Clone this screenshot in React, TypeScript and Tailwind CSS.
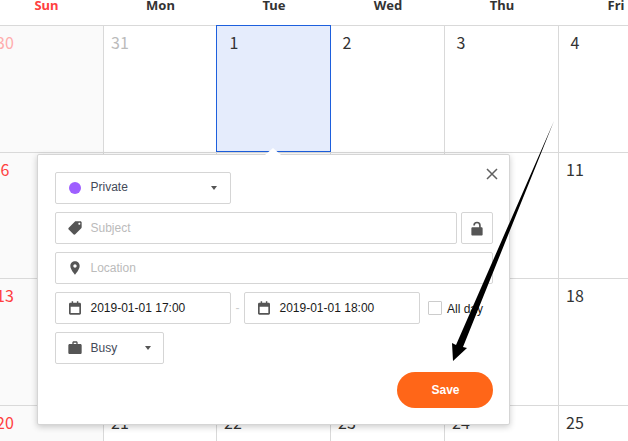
const columns = ["Sun", "Mon", "Tue", "Wed", "Thu", "Fri"];

const rows = [
  ["30", "31", "1", "2", "3", "4"],
  ["6", "", "", "", "", "11"],
  ["13", "", "", "", "", "18"],
  ["20", "21", "22", "23", "24", "25"],
];

function Icon({ d, flip, size = 16 }: { d: string; flip?: boolean; size?: number }) {
  return (
    <svg viewBox="0 0 24 24" width={size} height={size} fill="#555555" className={flip ? "shrink-0 -scale-x-100" : "shrink-0"}>
      <path d={d} fillRule="evenodd" />
    </svg>
  );
}

const TAG = "M21.41 11.58l-9-9C12.05 2.22 11.55 2 11 2H4c-1.1 0-2 .9-2 2v7c0 .55.22 1.05.59 1.42l9 9c.36.36.86.58 1.41.58.55 0 1.05-.22 1.41-.59l7-7c.37-.36.59-.86.59-1.41 0-.55-.23-1.06-.59-1.42zM5.5 7C4.67 7 4 6.33 4 5.5S4.67 4 5.5 4 7 4.67 7 5.5 6.33 7 5.5 7z";
const PLACE = "M12 2C8.13 2 5 5.13 5 9c0 5.25 7 13 7 13s7-7.75 7-13c0-3.87-3.13-7-7-7zm0 9.5c-1.38 0-2.5-1.12-2.5-2.5s1.12-2.5 2.5-2.5 2.5 1.12 2.5 2.5-1.12 2.5-2.5 2.5z";
const CAL = "M7 2h2.2v2h5.6V2H17v2h2c1.1 0 2 .9 2 2v14c0 1.1-.9 2-2 2H5c-1.1 0-2-.9-2-2V6c0-1.1.9-2 2-2h2V2zM5.5 10v9.5h13V10h-13z";
const WORK = "M20 6h-4V4c0-1.11-.89-2-2-2h-4c-1.11 0-2 .89-2 2v2H4c-1.11 0-1.99.89-1.99 2L2 19c0 1.11.89 2 2 2h16c1.11 0 2-.89 2-2V8c0-1.11-.89-2-2-2zm-6 0h-4V4h4v2z";
const LOCK = "M6 11h8.8V8.5a2.8 2.8 0 0 0-5.6 0H7a5 5 0 0 1 10 0V11h1c.8 0 1.5.7 1.5 1.5v8c0 .8-.7 1.5-1.5 1.5H6c-.8 0-1.5-.7-1.5-1.5v-8c0-.8.7-1.5 1.5-1.5z";

function Caret() {
  return <span className="w-0 h-0 border-x-[3.5px] border-x-transparent border-t-[4px] border-t-[#555555]" />;
}

export default function App() {
  return (
    <div className="relative w-[628px] h-[441px] overflow-hidden bg-white font-['Noto_Sans_CJK_SC','Noto_Sans',sans-serif]">
      <div className="w-[684px] -ml-[11px]">
        <div className="grid grid-cols-[115px_113px_114px_114px_114px_114px] h-[26px] border-b border-[#d9d9d9] font-['Noto_Sans',sans-serif]">
          {columns.map((name, j) => (
            <div key={name} className={`text-center text-[13px] leading-[10px] font-bold ${j === 0 ? "text-[#ff4040]" : "text-[#333333]"}`}>
              {name}
            </div>
          ))}
        </div>
        {rows.map((row, i) => (
          <div key={i} className="grid grid-cols-[115px_113px_114px_114px_114px_114px] h-[126.5px] border-b border-[#d9d9d9]">
            {row.map((n, j) => {
              const selected = i === 0 && j === 2;
              const color = j === 0 ? (i === 0 ? "text-[#ffadad]" : "text-[#ff4040]") : i === 0 && j === 1 ? "text-[#bbbbbb]" : "text-[#333333]";
              const look = selected ? "bg-[#e5ecfc] border border-[#1d5fdd] -ml-px -mt-px h-[127px]" : j === 0 ? "bg-[#fafafa] border-r border-[#d9d9d9]" : "border-r border-[#d9d9d9]";
              return (
                <div key={j} className={look}>
                  <div className={`w-8 text-center text-[16px] leading-[22px] mt-[5px] ${selected ? "ml-px" : ""} ${color}`}>{n}</div>
                </div>
              );
            })}
          </div>
        ))}
      </div>

      <div className="absolute left-[37px] top-[154px] w-[473px] h-[271px] bg-white border border-[#d5d5d5] rounded-[2px] shadow-[0_2px_6px_0_rgba(0,0,0,0.2)] pt-[17px] pl-[17px] font-['Liberation_Sans',sans-serif] text-[12px]">
        <div className="absolute -top-[7px] left-[227px] w-0 h-0 border-x-[8px] border-x-transparent border-b-[7px] border-b-white" />
        <svg viewBox="0 0 12 12" width="12" height="12" className="absolute left-[448px] top-[13px]">
          <path d="M1 1l10 10M11 1L1 11" stroke="#606060" strokeWidth="1.5" fill="none" />
        </svg>
        <div className="flex flex-col gap-2 w-[438px]">
          <div className="flex items-center h-8 w-[176px] border border-[#d5d5d5] rounded-[2px] pl-[13px] pr-[13px] text-[#444a58]">
            <span className="w-3 h-3 rounded-full bg-[#9e5fff] mr-[9.5px] shrink-0" />
            <span className="flex-1 -mt-[3px]">Private</span>
            <Caret />
          </div>
          <div className="flex gap-1">
            <div className="flex items-center gap-[7.5px] h-8 flex-1 border border-[#d5d5d5] rounded-[2px] pl-[11px] text-[#bbbbbb]">
              <Icon d={TAG} flip />
              <span className="-mt-[1px]">Subject</span>
            </div>
            <div className="flex items-center justify-center h-8 w-8 border border-[#d5d5d5] rounded-[2px]">
              <Icon d={LOCK} size={18} />
            </div>
          </div>
          <div className="flex items-center gap-[7.5px] h-8 border border-[#d5d5d5] rounded-[2px] pl-[11px] text-[#bbbbbb]">
            <Icon d={PLACE} />
            <span className="-mt-[1px]">Location</span>
          </div>
          <div className="flex items-center">
            <div className="flex items-center gap-[7.5px] h-8 w-[176px] border border-[#d5d5d5] rounded-[2px] pl-[11px] text-[#1a1a1a]">
              <Icon d={CAL} />
              <span>2019-01-01 17:00</span>
            </div>
            <span className="w-[13px] text-center text-[#cccccc]">-</span>
            <div className="flex items-center gap-[7.5px] h-8 w-[176px] border border-[#d5d5d5] rounded-[2px] pl-[11px] text-[#1a1a1a]">
              <Icon d={CAL} />
              <span>2019-01-01 18:00</span>
            </div>
            <span className="ml-2 w-[14px] h-[14px] border border-[#cccccc] rounded-[1px]" />
            <span className="ml-[5px] mt-[1px] text-[#1a1a1a]">All day</span>
          </div>
          <div className="flex items-center gap-[7.5px] h-8 w-[109px] border border-[#d5d5d5] rounded-[2px] pl-[11px] pr-3 text-[#444a58]">
            <Icon d={WORK} />
            <span className="flex-1 -mt-[1px]">Busy</span>
            <Caret />
          </div>
          <div className="flex justify-end">
            <div className="flex items-center justify-center w-24 h-9 pl-px rounded-full bg-[#ff6618] text-white font-bold">Save</div>
          </div>
        </div>
      </div>

      <svg viewBox="0 0 628 441" width="628" height="441" className="absolute inset-0 pointer-events-none">
        <polygon points="554,121 463,347 467,348 453,361 452,343 456,345" fill="#000000" />
      </svg>
    </div>
  );
}
